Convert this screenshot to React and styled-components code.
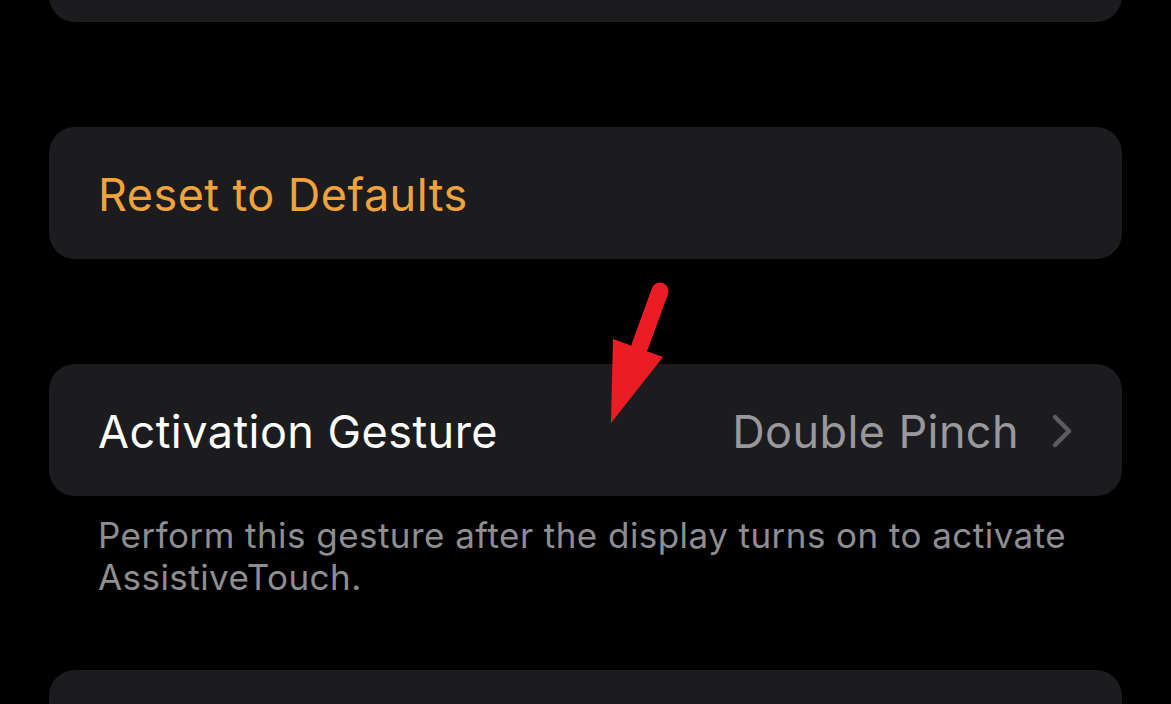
import React from 'react';
import styled, { createGlobalStyle } from 'styled-components';

const Global = createGlobalStyle`
	html, body {
		margin: 0;
		background: #000;
		overflow: hidden;
	}
	body {
		font-family: Inter, 'Noto Sans', sans-serif;
		-webkit-font-smoothing: antialiased;
	}
`;

const Page = styled.div`
	position: relative;
	width: 1171px;
	height: 704px;
	padding: 0 49px;
	box-sizing: border-box;
	display: flex;
	flex-direction: column;
	overflow: hidden;
`;

const Card = styled.div`
	background: #1c1c1e;
	border-radius: 26px;
	height: 132px;
	flex-shrink: 0;
	display: flex;
	align-items: center;
	padding: 2px 50px 0 49px;
	box-sizing: border-box;
	margin-top: ${(p) => p.$top || 0}px;
`;

const Label = styled.span`
	font-size: 45px;
	color: ${(p) => p.$color || '#fff'};
	letter-spacing: 0.45px;
	flex: 1;
`;

const Value = styled.span`
	font-size: 45px;
	color: #98989d;
	letter-spacing: 0.4px;
	margin-right: 33px;
`;

const Footer = styled.p`
	margin: 18px 0 0 49px;
	font-size: 35px;
	line-height: 42px;
	color: #8d8d92;
	letter-spacing: 0.45px;
	width: 1010px;
`;

const Arrow = styled.svg`
	position: absolute;
	left: 600px;
	top: 280px;
`;

const Chevron = () => (
	<svg width="20" height="34" viewBox="0 0 20 34">
		<path d="M3 3 L17 17 L3 31" fill="none" stroke="#5b5b60" strokeWidth="4.5" strokeLinecap="round" strokeLinejoin="round" />
	</svg>
);

const App = () => {
	return (
		<>
			<Global />
			<Page>
				<Card $top={-110} />
				<Card $top={105}>
					<Label $color="#f0a33b">Reset to Defaults</Label>
				</Card>
				<Card $top={105}>
					<Label>Activation Gesture</Label>
					<Value>Double Pinch</Value>
					<Chevron />
				</Card>
				<Footer>
					Perform this gesture after the display turns on to activate AssistiveTouch.
				</Footer>
				<Card $top={72} />
				<Arrow width="80" height="150" viewBox="600 280 80 150">
					<line x1="660" y1="291" x2="640" y2="346" stroke="#ec1c24" strokeWidth="17" strokeLinecap="round" />
					<polygon points="613,339 663,357 611,423" fill="#ec1c24" />
				</Arrow>
			</Page>
		</>
	);
};

export default App;
